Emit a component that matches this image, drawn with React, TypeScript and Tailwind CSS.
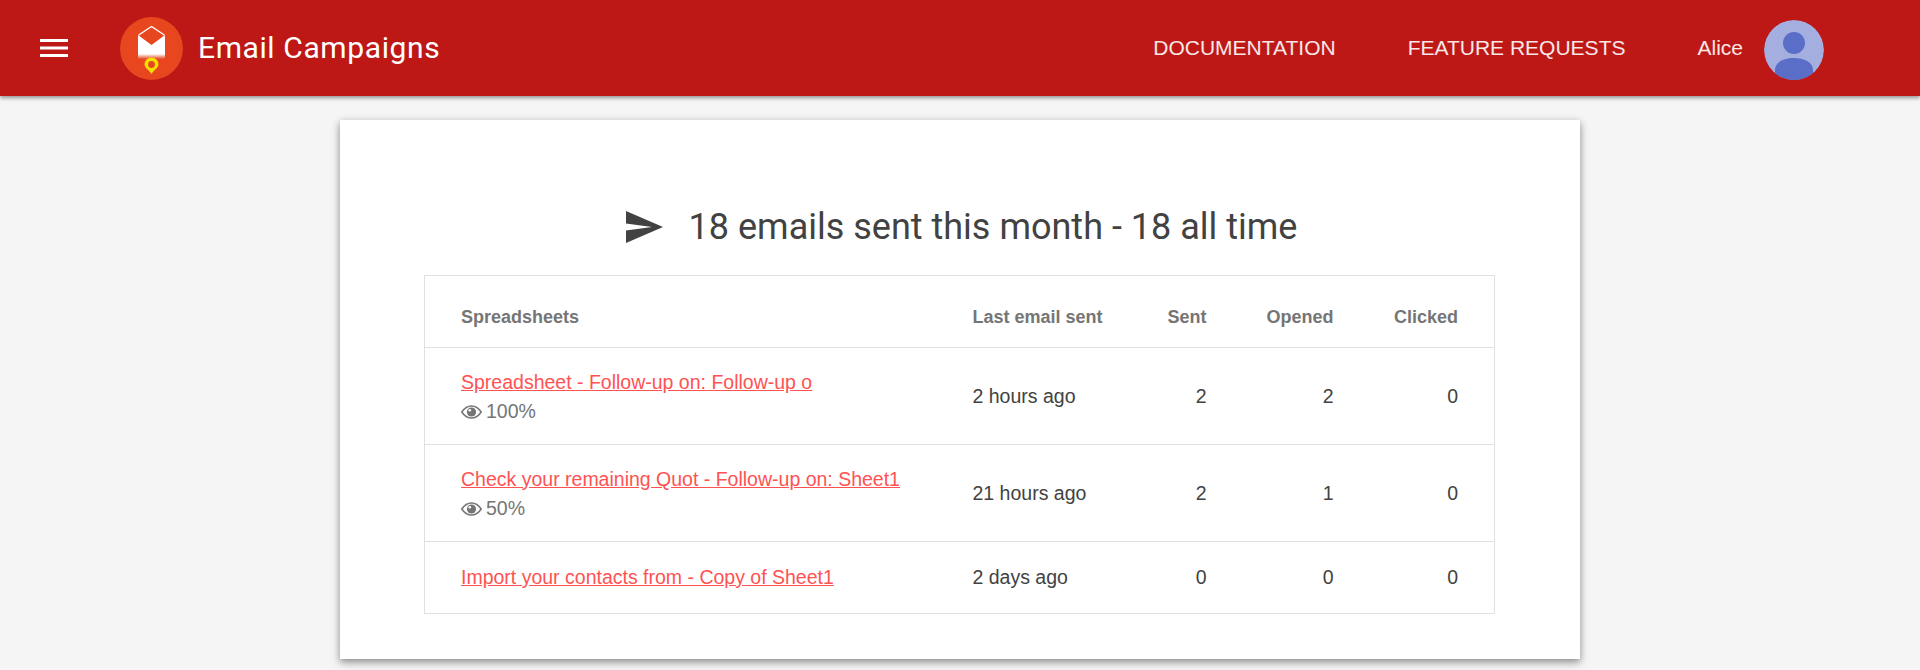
import React from "react";

const rows = [
  { name: "Spreadsheet - Follow-up on: Follow-up o", pct: "100%", last: "2 hours ago", s: 2, o: 2, c: 0 },
  { name: "Check your remaining Quot - Follow-up on: Sheet1", pct: "50%", last: "21 hours ago", s: 2, o: 1, c: 0 },
  { name: "Import your contacts from - Copy of Sheet1", pct: null, last: "2 days ago", s: 0, o: 0, c: 0 },
];

function Logo() {
  return (
    <svg width="63" height="63" viewBox="0 0 63 63" className="shrink-0">
      <defs>
        <linearGradient id="fade" x1="0" y1="0" x2="0" y2="1">
          <stop offset="0" stopColor="#fff" />
          <stop offset="1" stopColor="#fff" stopOpacity="0" />
        </linearGradient>
      </defs>
      <circle cx="31.5" cy="31.5" r="31.5" fill="#e8461f" />
      <path d="M18.7 18 L31.5 9.5 L44.3 18" fill="none" stroke="#fff" strokeWidth="1.5" strokeLinejoin="round" />
      <path d="M18 18 L31.5 28 L45 18 V37 H18 Z" fill="#fff" />
      <rect x="18" y="37" width="27" height="5" fill="url(#fade)" />
      <path d="M31.5 57 C29 53 24.5 50.5 24.5 47.5 A7 7 0 0 1 38.5 47.5 C38.5 50.5 34 53 31.5 57 Z" fill="#f2e000" />
      <circle cx="31.5" cy="47.5" r="3.4" fill="#e8461f" />
    </svg>
  );
}

function Avatar() {
  return (
    <svg width="60" height="60" viewBox="0 0 60 60" className="mt-1 shrink-0 rounded-full">
      <circle cx="30" cy="30" r="30" fill="#a4afe0" />
      <circle cx="30" cy="23" r="11" fill="#5a6ec8" />
      <path d="M11 60 V50 C11 42 20 38 30 38 C40 38 49 42 49 50 V60 Z" fill="#5a6ec8" />
    </svg>
  );
}

function Eye() {
  return (
    <svg width="21" height="14" viewBox="0 0 21 14" className="shrink-0" fill="none">
      <path d="M0.8 7 C3.8 2.4 7 0.9 10.5 0.9 C14 0.9 17.2 2.4 20.2 7 C17.2 11.6 14 13.1 10.5 13.1 C7 13.1 3.8 11.6 0.8 7 Z" stroke="#757575" strokeWidth="1.5" />
      <circle cx="10.5" cy="7" r="4.6" fill="#757575" />
      <circle cx="8.8" cy="5.2" r="1.3" fill="#fff" />
    </svg>
  );
}

export default function App() {
  return (
    <div className="h-[670px] overflow-hidden bg-[#f5f5f5] font-['Roboto',sans-serif]">
      <header className="relative z-10 flex h-24 items-center bg-[#bd1816] pl-10 pr-24 text-white shadow-[0_2px_4px_rgba(0,0,0,0.4)]">
        <svg width="28" height="18" viewBox="0 0 28 18" fill="#fff" className="shrink-0">
          <rect y="0" width="28" height="3" />
          <rect y="7.5" width="28" height="3" />
          <rect y="15" width="28" height="3" />
        </svg>
        <div className="ml-[52px] mt-px"><Logo /></div>
        <div className="mb-[2px] ml-[15px] text-[30px] tracking-[0.6px]">Email Campaigns</div>
        <nav className="ml-auto flex items-center font-['Liberation_Sans',sans-serif] text-[21px] text-white/90">
          <span>DOCUMENTATION</span>
          <span className="ml-[72px]">FEATURE REQUESTS</span>
          <span className="ml-[72px]">Alice</span>
          <span className="ml-[21px]"><Avatar /></span>
        </nav>
      </header>
      <main className="mx-auto mt-6 h-[539px] w-[1240px] bg-white pl-[84px] pr-[85px] pt-[77px] shadow-[0_3px_8px_rgba(0,0,0,0.45)]">
        <h1 className="flex h-[60px] items-center justify-center pl-[4px] text-[36px] font-normal text-[#424242]">
          <svg width="37" height="32" viewBox="0 0 37 32" className="mr-[26px] shrink-0" fill="#424242">
            <path d="M0 0 L37 16 L0 32 V19.5 L26 16 L0 12.5 Z" />
          </svg>
          18 emails sent this month - 18 all time
        </h1>
        <table className="mt-[18px] w-full table-fixed border-collapse border border-[#e0e0e0] font-['Liberation_Sans',sans-serif] text-[19.5px] text-[#424242]">
          <thead>
            <tr className="h-[72px] border-b border-[#e0e0e0] text-lg font-bold text-[#757575]">
              <th className="w-[548px] pl-9 pt-[10px] text-left">Spreadsheets</th>
              <th className="w-[154px] pt-[10px] text-left">Last email sent</th>
              <th className="w-[80px] pt-[10px] text-right">Sent</th>
              <th className="w-[127px] pt-[10px] text-right">Opened</th>
              <th className="pr-9 pt-[10px] text-right">Clicked</th>
            </tr>
          </thead>
          <tbody>
            {rows.map((r) => (
              <tr key={r.name} className={r.pct ? "h-[97px] border-b border-[#e0e0e0]" : "h-[72px]"}>
                <td className={r.pct ? "pl-9 pt-[2px]" : "pl-9"}>
                  <a className="text-[#ff5252] underline" href="#">{r.name}</a>
                  {r.pct && (
                    <div className="flex items-center gap-1 text-[#757575]">
                      <Eye />
                      {r.pct}
                    </div>
                  )}
                </td>
                <td className={r.pct ? "pt-[2px]" : ""}>{r.last}</td>
                <td className={r.pct ? "pt-[2px] text-right" : "text-right"}>{r.s}</td>
                <td className={r.pct ? "pt-[2px] text-right" : "text-right"}>{r.o}</td>
                <td className={r.pct ? "pr-9 pt-[2px] text-right" : "pr-9 text-right"}>{r.c}</td>
              </tr>
            ))}
          </tbody>
        </table>
      </main>
    </div>
  );
}
